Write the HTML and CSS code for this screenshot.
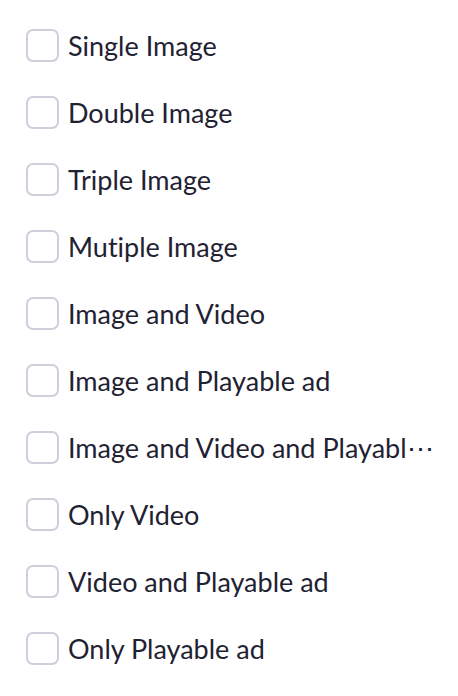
FILE: index.html
```html
<!DOCTYPE html>
<html lang="en">
<head>
  <meta charset="UTF-8">
  <meta name="viewport" content="width=device-width, initial-scale=1.0">
  <title>Creative Types</title>
  <link rel="stylesheet" href="styles.css">
</head>
<body>

  <div class="options">
    <label class="option"><span class="box"></span><span class="text">Single Image</span></label>
    <label class="option"><span class="box"></span><span class="text">Double Image</span></label>
    <label class="option"><span class="box"></span><span class="text">Triple Image</span></label>
    <label class="option"><span class="box"></span><span class="text">Mutiple Image</span></label>
    <label class="option"><span class="box"></span><span class="text">Image and Video</span></label>
    <label class="option"><span class="box"></span><span class="text">Image and Playable ad</span></label>
    <label class="option" title="Image and Video and Playable ad"><span class="box"></span><span class="text">Image and Video and Playabl<span class="more">⋯</span></span></label>
    <label class="option"><span class="box"></span><span class="text">Only Video</span></label>
    <label class="option"><span class="box"></span><span class="text">Video and Playable ad</span></label>
    <label class="option"><span class="box"></span><span class="text">Only Playable ad</span></label>
  </div>

</body>
</html>
```

FILE: styles.css
```css
body {
  font-family: Lato, "Open Sans", sans-serif;
  margin: 0;
  background-color: #fff;
  color: #1f2232;
}

.options {
  display: flex;
  flex-direction: column;
  padding: 12px 0 0 26px;
}

.option {
  display: flex;
  align-items: center;
  gap: 9px;
  height: 67px;
  cursor: pointer;
}

.box {
  flex: none;
  width: 29px;
  height: 29px;
  border: 2px solid #cdcfdb;
  border-radius: 7px;
  background-color: #fff;
}

.text {
  font-size: 27px;
  line-height: 1;
  white-space: nowrap;
  font-variant-ligatures: none;
}

.more {
  letter-spacing: -1px;
}
```
